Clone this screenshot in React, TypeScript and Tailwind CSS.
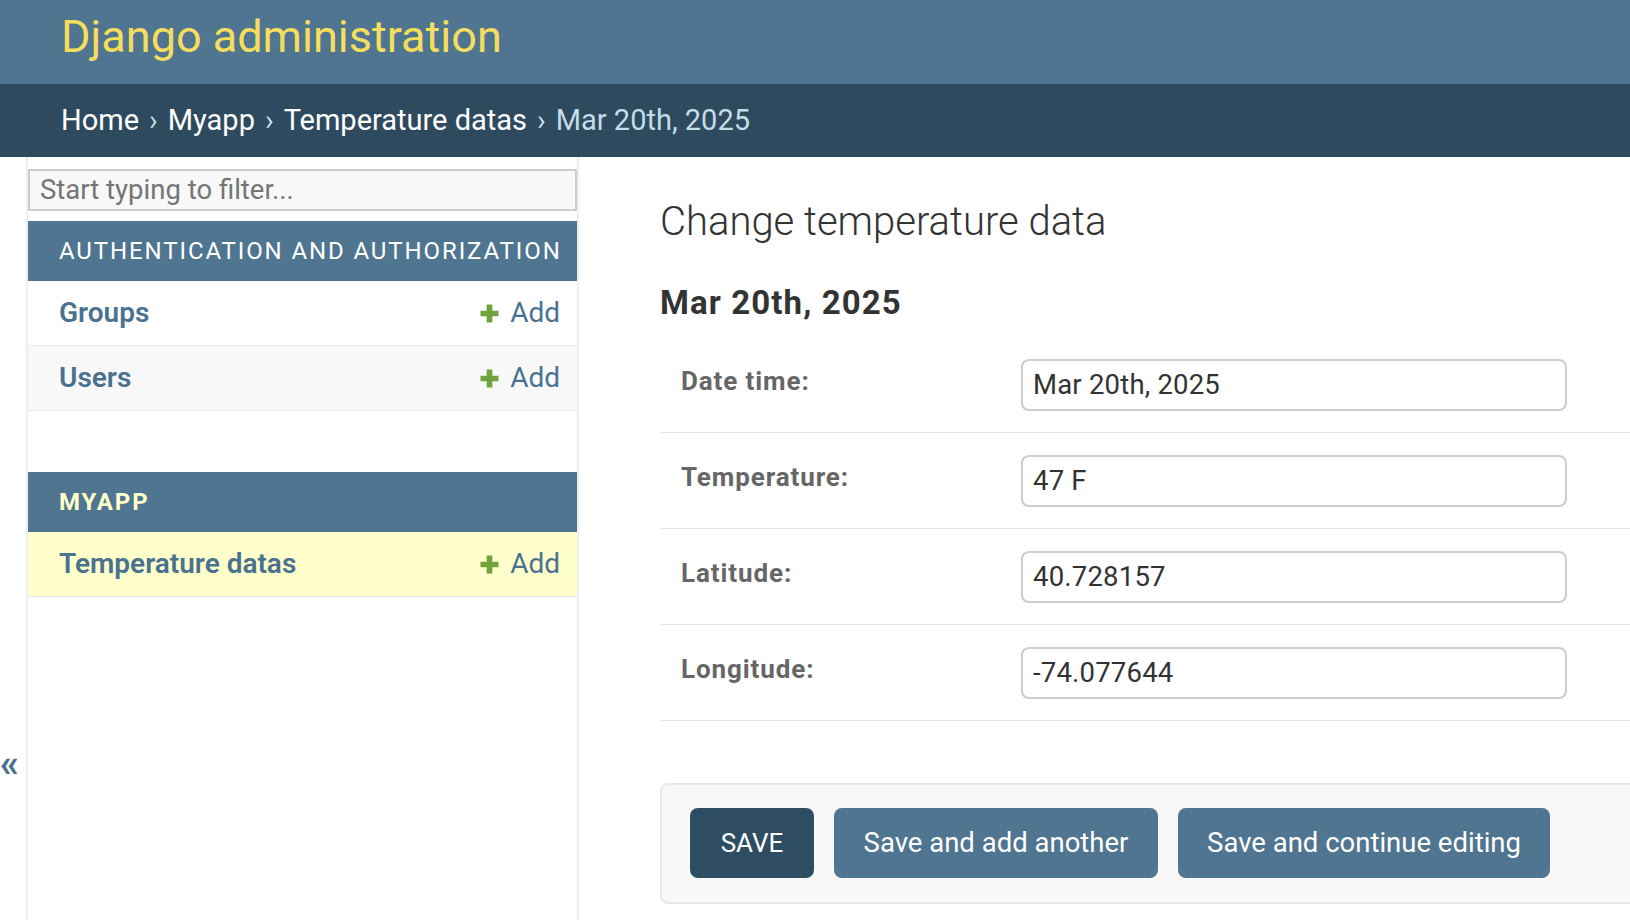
import React from "react";

const font = "font-['Roboto','Liberation_Sans',sans-serif]";

function PlusIcon() {
  return (
    <svg width="21" height="21" viewBox="0 0 14 14" className="shrink-0">
      <path d="M5.1 1h3.8v4.1H13v3.8H8.9V13H5.1V8.9H1V5.1h4.1z" fill="#70a33b" />
    </svg>
  );
}

function SideRow({ name, striped, current }: { name: string; striped?: boolean; current?: boolean }) {
  const bg = current ? "bg-[#ffffcc]" : striped ? "bg-[#f8f8f8]" : "bg-white";
  return (
    <div className={`flex h-[65px] items-center justify-between border-b border-[#e8e8e8] pl-[31px] pr-[17px] ${bg}`}>
      <span className="text-[28px] font-semibold text-[#4a7290]">{name}</span>
      <span className="flex items-center gap-[10px] text-[28px] text-[#4a7290]">
        <PlusIcon />
        Add
      </span>
    </div>
  );
}

function Caption({ text, current }: { text: string; current?: boolean }) {
  return (
    <div className="flex h-[60px] items-center bg-[#4f7590] pl-[31px]">
      <span
        className={`text-[24px] uppercase tracking-[1.9px] ${current ? "font-bold text-[#ffffcc]" : "text-white"}`}
      >
        {text}
      </span>
    </div>
  );
}

function FormRow({ label, value }: { label: string; value: string }) {
  return (
    <div className="flex h-[96px] border-b border-[#e8e8e8] pl-[21px] pt-[22px]">
      <label className="w-[340px] pt-[9px] text-[26px] font-bold leading-[26px] tracking-[0.9px] text-[#666]">
        {label}
      </label>
      <div className="flex h-[52px] w-[546px] shrink-0 items-center rounded-[8px] border-2 border-[#cccccc] bg-white px-[10px] text-[27.5px] tracking-[0.2px] text-[#333]">
        {value}
      </div>
    </div>
  );
}

export default function App() {
  return (
    <div className={`h-[920px] w-[1630px] overflow-hidden bg-white ${font}`}>
      <header className="flex h-[84px] items-start bg-[#4f7590] pl-[61px] pt-[14px]">
        <span className="text-[45px] leading-[46px] text-[#f5dd5d]">Django administration</span>
      </header>
      <nav className="flex h-[73px] items-center bg-[#2e4a5e] pl-[61px] text-[29px] text-[#c4dce8]">
        <span className="text-white">Home</span>
        <span className="px-[10px]">›</span>
        <span className="text-white">Myapp</span>
        <span className="px-[10px]">›</span>
        <span className="text-white">Temperature datas</span>
        <span className="px-[10px]">›</span>
        <span>Mar 20th, 2025</span>
      </nav>
      <div className="flex h-[763px]">
        <div className="w-[28px] shrink-0 overflow-hidden border-r-2 border-[#eeeeee] pt-[586px]">
          <span className="block text-[38px] font-bold leading-[40px] text-[#4a7290]">«</span>
        </div>
        <aside className="w-[551px] shrink-0 border-r-2 border-[#eeeeee]">
          <div className="mt-[12px] flex h-[42px] items-center border-2 border-[#cccccc] bg-[#f8f8f8] pl-[10px] text-[27.5px] text-[#757575]">
            Start typing to filter...
          </div>
          <div className="mt-[10px]">
            <Caption text="Authentication and Authorization" />
            <SideRow name="Groups" />
            <SideRow name="Users" striped />
          </div>
          <div className="mt-[61px]">
            <Caption text="Myapp" current />
            <SideRow name="Temperature datas" current />
          </div>
        </aside>
        <main className="min-w-0 flex-1 pl-[81px]">
          <h1 className="mt-[45px] text-[40px] font-light leading-[40px] text-[#333]">Change temperature data</h1>
          <h2 className="mt-[44px] text-[33px] font-bold leading-[33px] tracking-[1.1px] text-[#333]">Mar 20th, 2025</h2>
          <div className="mt-[18px]">
            <FormRow label="Date time:" value="Mar 20th, 2025" />
            <FormRow label="Temperature:" value="47 F" />
            <FormRow label="Latitude:" value="40.728157" />
            <FormRow label="Longitude:" value="-74.077644" />
          </div>
          <div className="mt-[62px] flex h-[121px] w-[1000px] items-start gap-[20px] rounded-[8px] border-2 border-[#e8e8e8] bg-[#f8f8f8] pl-[28px] pt-[23px]">
            <button className="h-[70px] w-[124px] rounded-[8px] bg-[#2e4d63] text-[26px] uppercase text-white">Save</button>
            <button className="h-[70px] w-[324px] rounded-[8px] bg-[#4f7590] text-[27.5px] text-white">Save and add another</button>
            <button className="h-[70px] w-[372px] rounded-[8px] bg-[#4f7590] text-[27.5px] text-white">Save and continue editing</button>
          </div>
        </main>
      </div>
    </div>
  );
}
